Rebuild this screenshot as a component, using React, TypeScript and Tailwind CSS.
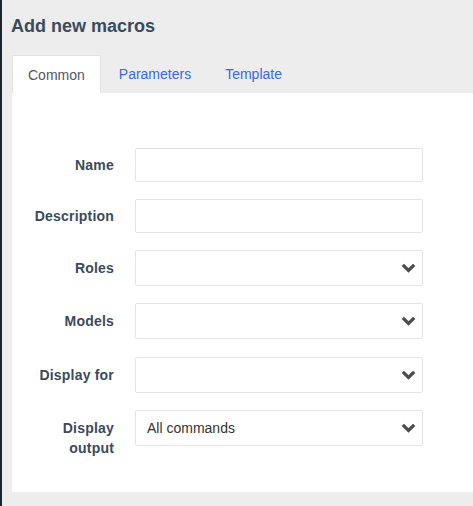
import React from "react"

const fields = [
  { label: ["Name"], kind: "input" },
  { label: ["Description"], kind: "input" },
  { label: ["Roles"], kind: "select" },
  { label: ["Models"], kind: "select" },
  { label: ["Display for"], kind: "select", extra: true },
  { label: ["Display", "output"], kind: "select", value: "All commands" },
]

function Chevron() {
  return (
    <svg width="15" height="10" viewBox="0 0 15 10" className="shrink-0">
      <polyline points="1.8,1.8 7.5,7.5 13.2,1.8" fill="none" stroke="#4d4d4d" strokeWidth="3.2" />
    </svg>
  )
}

export default function App() {
  return (
    <div className="flex w-[473px] h-[506px] bg-[#ededed] overflow-hidden" style={{ fontFamily: '"Liberation Sans", Arial, sans-serif' }}>
      <div className="w-[2px] bg-[#1f262e] shrink-0" />
      <div className="flex-1 flex flex-col pl-[10px]">
        <h1 className="mt-[16px] ml-[-1px] text-[18px] leading-[20px] font-bold text-[#3b4a5c]">Add new macros</h1>

        <div className="flex mt-[19px] text-[14px] leading-[20px]">
          <div className="h-[38px] px-[15px] flex items-center bg-white border border-b-0 border-[#e1e1e1] rounded-t-[2px] text-[#4f5866]">
            Common
          </div>
          <div className="h-[38px] ml-[2px] px-[16px] flex items-center text-[#3a66f2]">Parameters</div>
          <div className="h-[38px] ml-[2px] px-[16px] flex items-center text-[#3a66f2]">Template</div>
        </div>

        <div className="bg-white h-[399px] pt-[55px]">
          <div className="flex flex-col gap-[17px]">
            {fields.map((f) => (
              <div key={f.label.join(" ")} className={`flex ${f.extra ? "mt-[1px]" : ""}`}>
                <div
                  className={`w-[102px] text-right text-[14px] leading-[20px] font-bold tracking-[0.2px] text-[#3b4a5c] ${
                    f.kind === "input" ? "pt-[7px]" : "pt-[8px]"
                  }`}
                >
                  {f.label.map((l) => (
                    <div key={l}>{l}</div>
                  ))}
                </div>
                <div
                  className={`ml-[21px] w-[288px] border border-[#e4e4e4] rounded-[2px] bg-white flex items-center justify-between pl-[11px] pr-[6px] ${
                    f.kind === "input" ? "h-[34px]" : "h-[36px]"
                  }`}
                >
                  <span className="text-[14px] text-[#333]">{f.value ?? ""}</span>
                  {f.kind === "select" && <Chevron />}
                </div>
              </div>
            ))}
          </div>
        </div>
      </div>
    </div>
  )
}
